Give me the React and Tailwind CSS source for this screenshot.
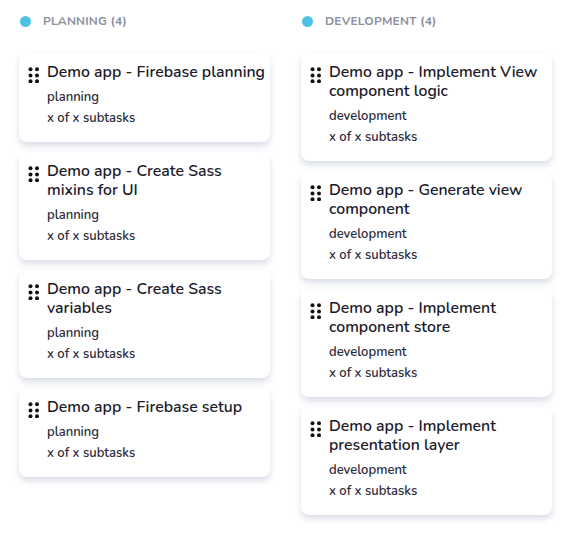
import React from "react";

const columns = [
  {
    name: "PLANNING",
    tasks: [
      { title: "Demo app - Firebase planning", tag: "planning" },
      { title: "Demo app - Create Sass mixins for UI", tag: "planning" },
      { title: "Demo app - Create Sass variables", tag: "planning" },
      { title: "Demo app - Firebase setup", tag: "planning" },
    ],
  },
  {
    name: "DEVELOPMENT",
    tasks: [
      { title: "Demo app - Implement View component logic", tag: "development" },
      { title: "Demo app - Generate view component", tag: "development" },
      { title: "Demo app - Implement component store", tag: "development" },
      { title: "Demo app - Implement presentation layer", tag: "development" },
    ],
  },
];

function DragIcon() {
  return (
    <svg width="12" height="16" viewBox="0 0 12 16" className="shrink-0 mt-[4px]">
      <circle cx="2.5" cy="2.2" r="2" fill="#111" />
      <circle cx="9" cy="2.2" r="2" fill="#111" />
      <circle cx="2.5" cy="8.4" r="2" fill="#111" />
      <circle cx="9" cy="8.4" r="2" fill="#111" />
      <circle cx="2.5" cy="14.3" r="2" fill="#111" />
      <circle cx="9" cy="14.3" r="2" fill="#111" />
    </svg>
  );
}

function TaskCard({ task }) {
  return (
    <div className="bg-white rounded-lg shadow-[0_4px_6px_rgba(90,105,150,0.22)] pl-[9px] pr-[3px] pt-[10px] pb-[16px] flex gap-[7px]">
      <DragIcon />
      <div>
        <h3 className="text-[15.8px] leading-[19px] font-semibold text-[#1b1b2a]">{task.title}</h3>
        <p className="mt-[8px] text-[13px] leading-[15px] font-semibold text-[#2c2c3a]">{task.tag}</p>
        <p className="mt-[6px] text-[13px] leading-[15px] font-semibold text-[#2c2c3a]">x of x subtasks</p>
      </div>
    </div>
  );
}

export default function App() {
  return (
    <div
      className="w-[562px] h-[535px] bg-white flex gap-[31px] pl-[19px] pt-[13px]"
      style={{ fontFamily: "Nunito, Lato, 'Noto Sans', sans-serif" }}
    >
      {columns.map((col) => (
        <div key={col.name} className="w-[251px]">
          <div className="flex items-center gap-[12px] pl-[1px] h-[16px]">
            <span className="w-[11px] h-[11px] rounded-full bg-[#4cc3e6]"></span>
            <span className="text-[12px] font-bold text-[#8b8fa0] tracking-[0.2px]">
              {col.name} ({col.tasks.length})
            </span>
          </div>
          <div className="mt-[24px] flex flex-col gap-[10px]">
            {col.tasks.map((t) => (
              <TaskCard key={t.title} task={t} />
            ))}
          </div>
        </div>
      ))}
    </div>
  );
}
